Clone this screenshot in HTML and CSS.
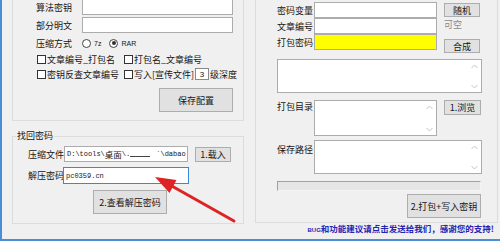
FILE: index.html
```html
<!DOCTYPE html>
<html>
<head>
<meta charset="utf-8">
<link rel="stylesheet" href="styles.css">
</head>
<body>
<div class="win">
  <div class="left">
    <div class="grp grp-top">
      <div class="row r-a"><span class="lbl">算法密钥</span><div class="tb tb-top"></div></div>
      <div class="row r-b"><span class="lbl">部分明文</span><div class="tb tb-top"></div></div>
      <div class="row r-c"><span class="lbl">压缩方式</span>
        <span class="radio"></span><span class="rtxt">7z</span>
        <span class="radio radio-on"><span class="dot"></span></span><span class="rtxt">RAR</span>
      </div>
      <div class="row r-d">
        <span class="chk-item"><span class="chk"></span>文章编号_打包名</span>
        <span class="chk-item"><span class="chk"></span>打包名_文章编号</span>
      </div>
      <div class="row r-e">
        <span class="chk-item"><span class="chk"></span>密钥反查文章编号</span>
        <span class="chk-item chk-wide"><span class="chk"></span>写入[宣传文件]<span class="num">3</span>级深度</span>
      </div>
      <div class="btn-row"><div class="btn btn-save">保存配置</div></div>
    </div>
    <div class="grp grp-find">
      <span class="legend">找回密码</span>
      <div class="row f-row1"><span class="lbl lbl-f">压缩文件</span><div class="tb tb-file mono">D:\tools\<span class="cjk">桌面</span>\.<span class="blur"></span>`\dabao</div><div class="btn btn-s btn-load">1.载入</div></div>
      <div class="row f-row2"><span class="lbl lbl-f2">解压密码</span><div class="tb tb-pw mono">pc0359.cn</div></div>
      <div class="btn btn-view">2.查看解压密码</div>
    </div>
  </div>
  <div class="right">
    <div class="grp grp-right">
      <div class="rt-top">
        <div class="rt-fields">
          <div class="row rt-row"><span class="lbl lbl-r">密码变量</span><div class="tb tb-r"></div></div>
          <div class="row rt-row"><span class="lbl lbl-r">文章编号</span><div class="tb tb-r"></div></div>
          <div class="row rt-row"><span class="lbl lbl-r">打包密码</span><div class="tb tb-r tb-yellow"></div></div>
        </div>
        <div class="rt-btns">
          <div class="btn btn-s btn-rand">随机</div>
          <div class="opt">可空</div>
          <div class="btn btn-s btn-comb">合成</div>
        </div>
      </div>
      <div class="tb ta ta-big"><div class="sb"><svg width="7" height="5" viewBox="0 0 7 5"><path d="M0.5 4 L3.5 1 L6.5 4" fill="none" stroke="#c4c4c4" stroke-width="1"/></svg><svg width="7" height="5" viewBox="0 0 7 5"><path d="M0.5 1 L3.5 4 L6.5 1" fill="none" stroke="#c4c4c4" stroke-width="1"/></svg></div></div>
      <div class="dir-row">
        <span class="lbl lbl-r">打包目录</span>
        <div class="tb ta ta-dir"><div class="sb"><svg width="7" height="5" viewBox="0 0 7 5"><path d="M0.5 4 L3.5 1 L6.5 4" fill="none" stroke="#c4c4c4" stroke-width="1"/></svg><svg width="7" height="5" viewBox="0 0 7 5"><path d="M0.5 1 L3.5 4 L6.5 1" fill="none" stroke="#c4c4c4" stroke-width="1"/></svg></div></div>
        <div class="btn btn-s btn-browse">1.浏览</div>
      </div>
      <div class="save-row">
        <span class="lbl lbl-r lbl-save">保存路径</span>
        <div class="tb ta ta-save"><div class="sb"><svg width="7" height="5" viewBox="0 0 7 5"><path d="M0.5 4 L3.5 1 L6.5 4" fill="none" stroke="#c4c4c4" stroke-width="1"/></svg><svg width="7" height="5" viewBox="0 0 7 5"><path d="M0.5 1 L3.5 4 L6.5 1" fill="none" stroke="#c4c4c4" stroke-width="1"/></svg></div></div>
      </div>
      <div class="progress"></div>
      <div class="btn btn-pack">2.打包+写入密钥</div>
    </div>
    <div class="footer"><span class="bug">BUG</span>和功能建议请点击发送给我们，感谢您的支持!</div>
  </div>
  <svg class="arrow" width="500" height="241" viewBox="0 0 500 241">
    <line x1="234" y1="221" x2="170" y2="185" stroke="#dd2323" stroke-width="3" stroke-linecap="round"/>
    <polygon points="155,177 176.5,180 169.5,193" fill="#dd2323"/>
  </svg>
</div>
</body>
</html>
```
FILE: styles.css
```css
html, body { margin: 0; padding: 0; background: #f0f0f0; }
.win {
  width: 500px; height: 241px; box-sizing: border-box;
  border-left: 2px solid #4a8fd6; border-bottom: 2px solid #4a8fd6;
  background: #f0f0f0; display: flex; position: relative; overflow: hidden;
  font-family: "Noto Sans CJK SC", sans-serif; font-size: 9px; color: #151515;
}
.left { margin-left: 10px; width: 232px; flex: none; display: flex; flex-direction: column; }
.right { margin-left: 11px; width: 243px; flex: none; display: flex; flex-direction: column; }
.grp { border: 1px solid #dcdcdc; box-sizing: border-box; }
.row { display: flex; align-items: center; }
.lbl { flex: none; white-space: nowrap; }
.tb { border: 1px solid #acacac; background: #fff; box-sizing: border-box; flex: none; }
.btn {
  background: #e1e1e1; border: 1px solid #adadad; box-sizing: border-box;
  display: flex; align-items: center; justify-content: center; flex: none; white-space: nowrap;
}

/* upper left group */
.grp-top { margin-top: -10px; height: 131px; padding: 8px 0 0 23px; }
.grp-top .lbl { width: 46px; }
.tb-top { width: 151px; height: 16px; }
.r-a { height: 16px; }
.r-b { height: 16px; margin-top: 2px; }
.r-c { height: 14px; margin-top: 3px; }
.radio {
  width: 9px; height: 9px; border: 1px solid #444; border-radius: 50%; box-sizing: border-box;
  background: #fff; display: flex; align-items: center; justify-content: center; flex: none;
}
.dot { width: 4px; height: 4px; border-radius: 50%; background: #333; }
.rtxt { font-family: "Liberation Sans", sans-serif; font-size: 7px; margin-left: 3px; margin-right: 8px; }
.r-d { height: 14px; margin-top: 2px; padding-left: 1px; }
.r-e { height: 14px; margin-top: 1px; padding-left: 1px; }
.chk-item { display: flex; align-items: center; width: 87px; flex: none; white-space: nowrap; }
.chk-wide { width: auto; }
.chk { width: 9px; height: 9px; border: 1px solid #333; background: #fff; box-sizing: border-box; margin-right: 1px; flex: none; }
.num {
  width: 14px; height: 12px; border: 1px solid #8a8a8a; background: #fff; box-sizing: border-box;
  display: flex; align-items: center; justify-content: center; margin: 0 1px; font-family: "Liberation Sans", sans-serif; font-size: 8px;
}
.btn-row { display: flex; margin-top: 7px; }
.btn-save { margin-left: auto; margin-right: 10px; width: 74px; height: 24px; }

/* lower left group */
.grp-find { margin-top: 15px; height: 88px; padding: 0 0 0 15px; }
.legend {
  display: block; width: max-content; margin: -7px 0 0 -12px; padding: 0 1px;
  background: #f0f0f0; height: 12px; line-height: 12px;
}
.f-row1 { height: 16px; margin-top: 4px; }
.lbl-f { width: 36px; }
.mono { font-family: "Liberation Mono", "Noto Sans CJK SC", monospace; font-size: 7px; display: flex; align-items: center; padding-left: 2px; white-space: nowrap; overflow: hidden; }
.cjk { font-family: "Noto Sans CJK SC", sans-serif; font-size: 8.5px; }
.tb-file { width: 124px; height: 16px; }
.blur { display: inline-block; width: 20px; height: 1px; background: #444; margin: 4px 6px 0 0; }
.btn-s { width: 36px; height: 15px; }
.btn-load { margin-left: 7px; }
.f-row2 { height: 17px; margin-top: 5px; }
.lbl-f2 { width: 35px; }
.tb-pw { width: 126px; height: 17px; border-color: #3c88d4; }
.btn-view { margin: 6px 0 0 65px; width: 74px; height: 24px; }

/* right group */
.grp-right { margin-top: -10px; height: 233px; padding: 11px 0 0 21px; }
.rt-top { display: flex; }
.rt-fields { display: flex; flex-direction: column; }
.rt-row { height: 16px; }
.lbl-r { width: 37px; }
.tb-r { width: 123px; height: 16px; }
.tb-yellow { background: #ffff00; }
.rt-btns { margin-left: 7px; display: flex; flex-direction: column; }
.btn-rand { margin-top: 1px; height: 14px; }
.opt { margin-top: 1px; height: 14px; line-height: 14px; color: #8a8a8a; }
.btn-comb { margin-top: 7px; height: 14px; }
.ta { display: flex; justify-content: flex-end; }
.sb { display: flex; flex-direction: column; justify-content: space-between; padding: 4px 3px 3px 0; }
.sb svg { display: block; }
.ta-big { width: 205px; height: 34px; margin-top: 6px; }
.dir-row { display: flex; margin-top: 7px; }
.dir-row .lbl { line-height: 14px; }
.ta-dir { width: 123px; height: 36px; }
.btn-browse { margin-left: 7px; width: 37px; height: 15px; }
.save-row { display: flex; margin-top: 4px; }
.lbl-save { margin-top: 3px; line-height: 14px; }
.ta-save { width: 168px; height: 34px; }
.progress {
  margin-top: 7px; width: 204px; height: 10px; box-sizing: border-box; background: #e6e6e6;
  border: 1px solid #f4f4f4; border-top-color: #a0a0a0; border-left-color: #a0a0a0;
}
.btn-pack { margin: 3px 0 0 130px; width: 74px; height: 24px; }
.footer {
  height: 12px; line-height: 12px; text-align: right; padding-right: 4px; margin-top: -1px;
  color: #2424b0; font-size: 8.5px; font-weight: bold; white-space: nowrap;
}
.bug { font-family: "Liberation Sans", sans-serif; font-size: 6px; }
.arrow { position: absolute; left: -2px; top: 0; pointer-events: none; }
```
